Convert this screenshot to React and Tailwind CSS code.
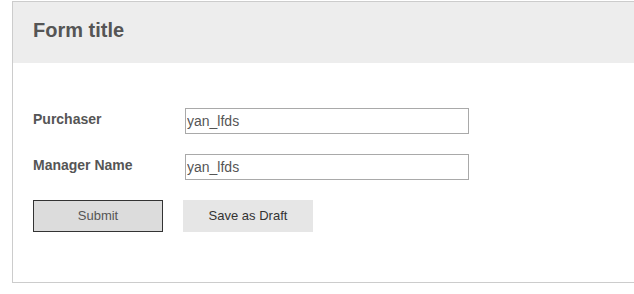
import React, { useState } from 'react';

const Field = ({ label, value, onChange }) => (
    <div className="flex items-start">
        <label className="w-[152px] shrink-0 pt-[3px] text-[14px] leading-[16px] font-bold text-[#555555]">
            {label}
        </label>
        <input
            type="text"
            value={value}
            onChange={(e) => onChange(e.target.value)}
            className="w-[284px] h-[26px] border border-[#a9a9a9] bg-white pl-px text-[14px] text-[#555555] outline-none"
        />
    </div>
);

const App = () => {
    const [purchaser, setPurchaser] = useState('yan_lfds');
    const [manager, setManager] = useState('yan_lfds');

    return (
        <div
            className="w-[634px] h-[294px] overflow-hidden bg-white pt-px"
            style={{ fontFamily: '"Liberation Sans", Arial, sans-serif' }}
        >
            <div className="ml-[12px] w-[700px] border-t border-l border-b border-[#cccccc]">
                <div className="h-[61px] bg-[#ededed] pl-[20px] pt-[17px]">
                    <h1 className="text-[20px] leading-[23px] font-bold text-[#555555]">Form title</h1>
                </div>

                <form
                    onSubmit={(e) => e.preventDefault()}
                    className="flex flex-col gap-[20px] pl-[20px] pt-[45px] pb-[50px]"
                >
                    <Field label="Purchaser" value={purchaser} onChange={setPurchaser} />
                    <Field label="Manager Name" value={manager} onChange={setManager} />

                    <div className="flex gap-[20px]">
                        <button
                            type="submit"
                            className="w-[130px] h-[32px] border border-[#333333] bg-[#dcdcdc] text-[13px] text-[#555555]"
                        >
                            Submit
                        </button>
                        <button
                            type="button"
                            className="w-[130px] h-[32px] bg-[#e6e6e6] text-[13px] text-[#333333]"
                        >
                            Save as Draft
                        </button>
                    </div>
                </form>
            </div>
        </div>
    );
};

export default App;
